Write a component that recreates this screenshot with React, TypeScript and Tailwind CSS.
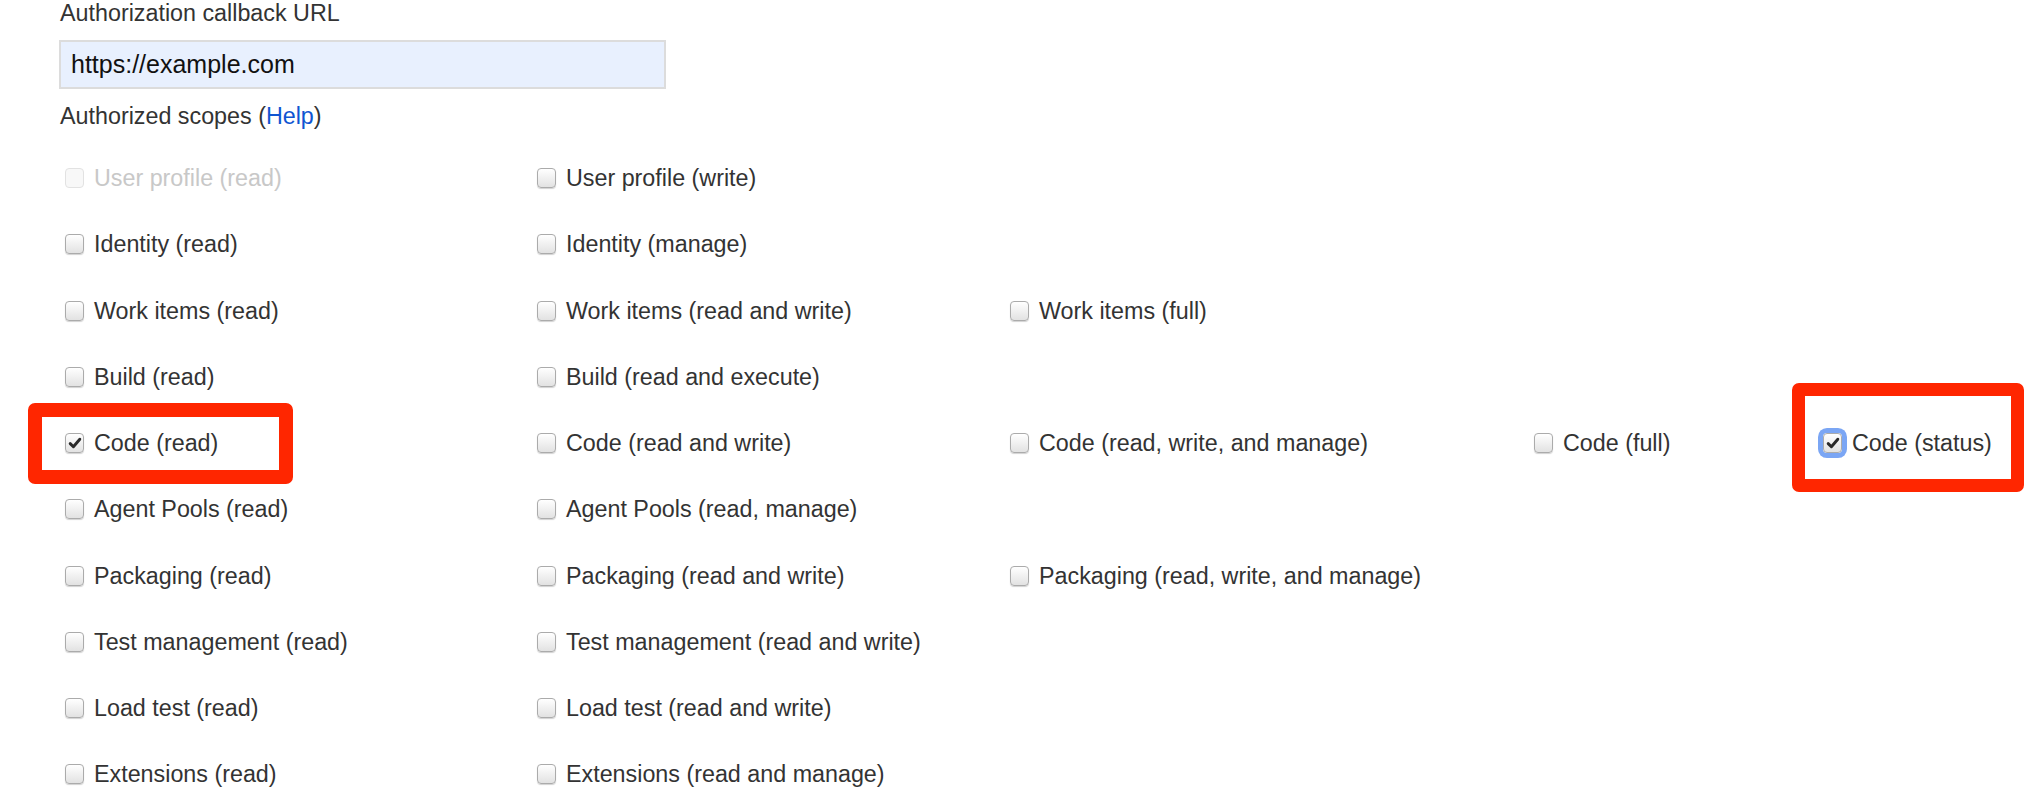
import clsx from "clsx";

type Scope = { label: string; checked?: boolean; disabled?: boolean; focused?: boolean } | null;

const rows: Scope[][] = [
  [{ label: "User profile (read)", disabled: true }, { label: "User profile (write)" }],
  [{ label: "Identity (read)" }, { label: "Identity (manage)" }],
  [{ label: "Work items (read)" }, { label: "Work items (read and write)" }, { label: "Work items (full)" }],
  [{ label: "Build (read)" }, { label: "Build (read and execute)" }],
  [
    { label: "Code (read)", checked: true },
    { label: "Code (read and write)" },
    { label: "Code (read, write, and manage)" },
    { label: "Code (full)" },
    { label: "Code (status)", checked: true, focused: true },
  ],
  [{ label: "Agent Pools (read)" }, { label: "Agent Pools (read, manage)" }],
  [{ label: "Packaging (read)" }, { label: "Packaging (read and write)" }, { label: "Packaging (read, write, and manage)" }],
  [{ label: "Test management (read)" }, { label: "Test management (read and write)" }],
  [{ label: "Load test (read)" }, { label: "Load test (read and write)" }],
  [{ label: "Extensions (read)" }, { label: "Extensions (read and manage)" }],
];

function CheckBox({ checked, disabled, focused }: { checked?: boolean; disabled?: boolean; focused?: boolean }) {
  return (
    <span
      className={clsx(
        "flex h-[20px] w-[19px] shrink-0 items-center justify-center rounded-[4px] border",
        disabled && "border-[#e2e2e2] bg-[#f8f8f8]",
        !disabled && "border-[#ababab] bg-linear-to-b from-white to-[#e2e2e2]",
        !disabled && !focused && "shadow-[0_1px_1px_rgba(0,0,0,0.18)]",
        focused && "shadow-[0_0_0_5px_#7ba6f4]"
      )}
    >
      {checked && (
        <svg width="14" height="14" viewBox="0 0 14 14">
          <path d="M2.2 7.6 L5.4 10.8 L11.8 3.2" fill="none" stroke="#2a2a2a" strokeWidth="2.9" strokeLinecap="round" strokeLinejoin="round" />
        </svg>
      )}
    </span>
  );
}

export default function App() {
  return (
    <div
      className="relative h-[802px] w-[2031px] overflow-hidden bg-white pl-[60px] text-[#333]"
      style={{ fontFamily: '"Liberation Sans", Arial, sans-serif' }}
    >
      <p className="text-[23.3px] leading-[26px]">Authorization callback URL</p>
      <div className="mt-[14px] flex h-[49px] w-[607px] -translate-x-px items-center border-2 border-[#dcdcdc] bg-[#e8f0fe] pl-[10px] text-[25px] text-[#111]">
        https://example.com
      </div>
      <p className="mt-[14px] text-[23.3px] leading-[26px]">
        Authorized scopes (<span className="text-[#0f55d2]">Help</span>)
      </p>

      <div className="mt-[16px] ml-[5px] flex flex-col">
        {rows.map((row, i) => (
          <div key={i} className="grid h-[66.25px] grid-cols-[472px_473px_524px_289px_auto] items-center">
            {row.map((s, j) =>
              s ? (
                <label key={j} className={clsx("flex items-center gap-[10px] text-[23.3px] leading-[26px]", s.disabled && "text-[#c8c8c8]")}>
                  <CheckBox checked={s.checked} disabled={s.disabled} focused={s.focused} />
                  <span className="whitespace-nowrap">{s.label}</span>
                </label>
              ) : (
                <span key={j} />
              )
            )}
          </div>
        ))}
      </div>

      {/* annotation boxes */}
      <div className="absolute left-[28px] top-[403px] h-[81px] w-[265px] rounded-[7px] border-[14px] border-[#ff2600]" />
      <div className="absolute left-[1792px] top-[383px] h-[109px] w-[232px] rounded-[7px] border-[13px] border-[#ff2600]" />
    </div>
  );
}
